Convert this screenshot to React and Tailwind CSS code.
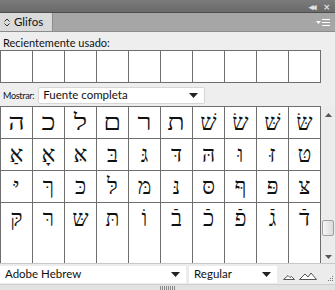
import React from 'react';

const UI = { fontFamily: 'Lato, "Liberation Sans", sans-serif' };
const HEB = { fontFamily: '"Liberation Serif", "DejaVu Sans", serif' };

const D = '\u05BC'; // dagesh
const R = '\u05BF'; // rafe

// glyph table, left to right as shown in the panel
const rows = [
  ['\u05D4', '\u05DB', '\u05DC', '\u05DD', '\u05E8', '\u05EA', '\u05E9\u05C1', '\u05E9\u05C2', '\u05E9' + D + '\u05C1', '\u05E9' + D + '\u05C2'],
  ['\u05D0\u05B7', '\u05D0\u05B8', '\u05D0' + D, '\u05D1' + D, '\u05D2' + D, '\u05D3' + D, '\u05D4' + D, '\u05D5' + D, '\u05D6' + D, '\u05D8' + D],
  ['\u05D9' + D, '\u05DA' + D, '\u05DB' + D, '\u05DC' + D, '\u05DE' + D, '\u05E0' + D, '\u05E1' + D, '\u05E3' + D, '\u05E4' + D, '\u05E6' + D],
  ['\u05E7' + D, '\u05E8' + D, '\u05E9' + D, '\u05EA' + D, '\u05D5\u05B9', '\u05D1' + R, '\u05DB' + R, '\u05E4' + R, '\u05D2' + R, '\u05D3' + R],
];

const Caret = () => (
  <svg width="9" height="5" viewBox="0 0 9 5"><path d="M0 0h9L4.5 5z" fill="#222" /></svg>
);

const Mountain = ({ big }) => (
  <svg width={big ? 18 : 12} height={big ? 8 : 6} viewBox={big ? '0 0 18 8' : '0 0 12 6'}>
    {big ? (
      <path d="M0.5 7.5L6 2l3 3 3-4 5.5 6.5z" fill="#fff" stroke="#555" strokeWidth="1" />
    ) : (
      <path d="M0.5 5.5L5 1.5l2 2 1.5-1 3 3z" fill="#fff" stroke="#555" strokeWidth="1" />
    )}
  </svg>
);

const Grip = ({ n = 8 }) => (
  <div className="flex gap-[1px]">
    {Array.from({ length: n }).map((_, i) => (
      <div key={i} className="w-px h-[4px] bg-[#8a8a8a]" />
    ))}
  </div>
);

export default function App() {
  return (
    <div className="w-[335px] h-[290px] bg-[#eeeeee] flex flex-col overflow-hidden text-[#111]" style={UI}>
      {/* title strip */}
      <div className="h-[13px] shrink-0 bg-gradient-to-b from-[#7b7b7b] to-[#6a6a6a] border-b border-[#4d4d4d] flex items-center justify-end gap-[9px] pr-[5px]">
        <span className="text-[9px] leading-none text-[#e0e0e0] tracking-[-2px] font-bold">◂◂</span>
        <span className="text-[11px] leading-none text-[#e0e0e0] font-bold">×</span>
      </div>

      {/* tab row */}
      <div className="h-[19px] shrink-0 bg-[#a6a6a6] border-b border-[#8c8c8c] flex items-stretch">
        <div className="w-[53px] bg-[#dadada] border-r border-[#8c8c8c] flex items-center pl-[4px] gap-[4px]">
          <svg width="6" height="9" viewBox="0 0 6 9"><path d="M0.5 3.5L3 1l2.5 2.5M0.5 5.5L3 8l2.5-2.5" fill="none" stroke="#333" strokeWidth="1" /></svg>
          <span className="text-[11.5px] leading-none">Glifos</span>
        </div>
        <div className="flex-1 flex items-center justify-end pr-[5px] gap-[1px]">
          <svg width="5" height="3" viewBox="0 0 5 3"><path d="M0 0h5L2.5 3z" fill="#fff" /></svg>
          <div className="flex flex-col gap-[2px]">
            <div className="w-[8px] h-px bg-white" />
            <div className="w-[8px] h-px bg-white" />
            <div className="w-[8px] h-px bg-white" />
          </div>
        </div>
      </div>

      {/* recently used */}
      <div className="pl-[3px] pt-[4px] h-[18px] shrink-0 text-[11px] leading-[13px]">Recientemente usado:</div>
      <div className="flex shrink-0 h-[33px] border-t border-l border-b border-[#6e6e6e] w-[321px]">
        {Array.from({ length: 10 }).map((_, i) => (
          <div key={i} className="w-[32px] shrink-0 bg-white border-r border-[#6e6e6e]" />
        ))}
      </div>

      {/* show filter */}
      <div className="h-[22px] shrink-0 flex items-center pt-[2px] pl-[3px] gap-[4px]">
        <span className="text-[9px] leading-none tracking-[-0.3px]">Mostrar:</span>
        <div className="w-[167px] h-[17px] bg-white border border-[#d6d6d6] rounded-[2px] flex items-center justify-between pl-[4px] pr-[6px]">
          <span className="text-[11.5px] leading-none">Fuente completa</span>
          <Caret />
        </div>
      </div>

      {/* glyph grid + scrollbar */}
      <div className="mt-[1px] h-[157px] shrink-0 flex">
        <div className="w-[321px] border-t border-l border-[#6e6e6e] overflow-hidden" style={HEB}>
          {rows.map((r, ri) => (
            <div key={ri} className={'flex ' + (ri === 3 ? 'h-[60px]' : 'h-[32px] border-b border-[#6e6e6e]')}>
              {r.map((g, ci) => (
                <div key={ci} className="w-[32px] shrink-0 bg-white border-r border-[#6e6e6e] flex justify-center">
                  <span
                    className={'text-[23px] leading-none mt-[4px] inline-block ' + (ri === 0 && ci < 6 ? 'scale-x-[1.25]' : '')}
                  >
                    {g}
                  </span>
                </div>
              ))}
            </div>
          ))}
        </div>
        <div className="flex-1 bg-[#ececec] flex flex-col items-center justify-between pt-[7px] pb-[4px]">
          <svg width="7" height="4" viewBox="0 0 7 4"><path d="M0 4h7L3.5 0z" fill="#555" /></svg>
          <div className="flex-1" />
          <div className="w-[12px] h-[16px] mb-[19px] border border-[#a0a0a0] rounded-[2px] bg-gradient-to-r from-[#f6f6f6] to-[#dcdcdc]" />
          <svg width="7" height="4" viewBox="0 0 7 4"><path d="M0 0h7L3.5 4z" fill="#555" /></svg>
        </div>
      </div>

      {/* font / style bar */}
      <div className="h-[21px] shrink-0 flex items-center border-t border-[#c8c8c8] bg-[#ececec]">
        <div className="w-[186px] h-[17px] bg-white flex items-center justify-between pl-[5px] pr-[6px]">
          <span className="text-[11.5px] leading-none">Adobe Hebrew</span>
          <Caret />
        </div>
        <div className="ml-[3px] w-[88px] h-[17px] bg-white flex items-center justify-between pl-[5px] pr-[6px]">
          <span className="text-[11.5px] leading-none">Regular</span>
          <Caret />
        </div>
        <div className="flex items-end gap-[4px] ml-[6px] pt-[4px]">
          <Mountain />
          <Mountain big />
        </div>
        <div className="ml-auto mr-[2px] mt-[8px] grid grid-cols-3 gap-[1px]">
          {[0, 0, 1, 0, 1, 1, 1, 1, 1].map((v, i) => (
            <div key={i} className={'w-px h-px ' + (v ? 'bg-[#777]' : 'bg-transparent')} />
          ))}
        </div>
      </div>

      {/* status grip */}
      <div className="flex-1 bg-[#e2e2e2] border-t border-[#cfcfcf] flex justify-center items-center">
        <Grip />
      </div>
    </div>
  );
}
